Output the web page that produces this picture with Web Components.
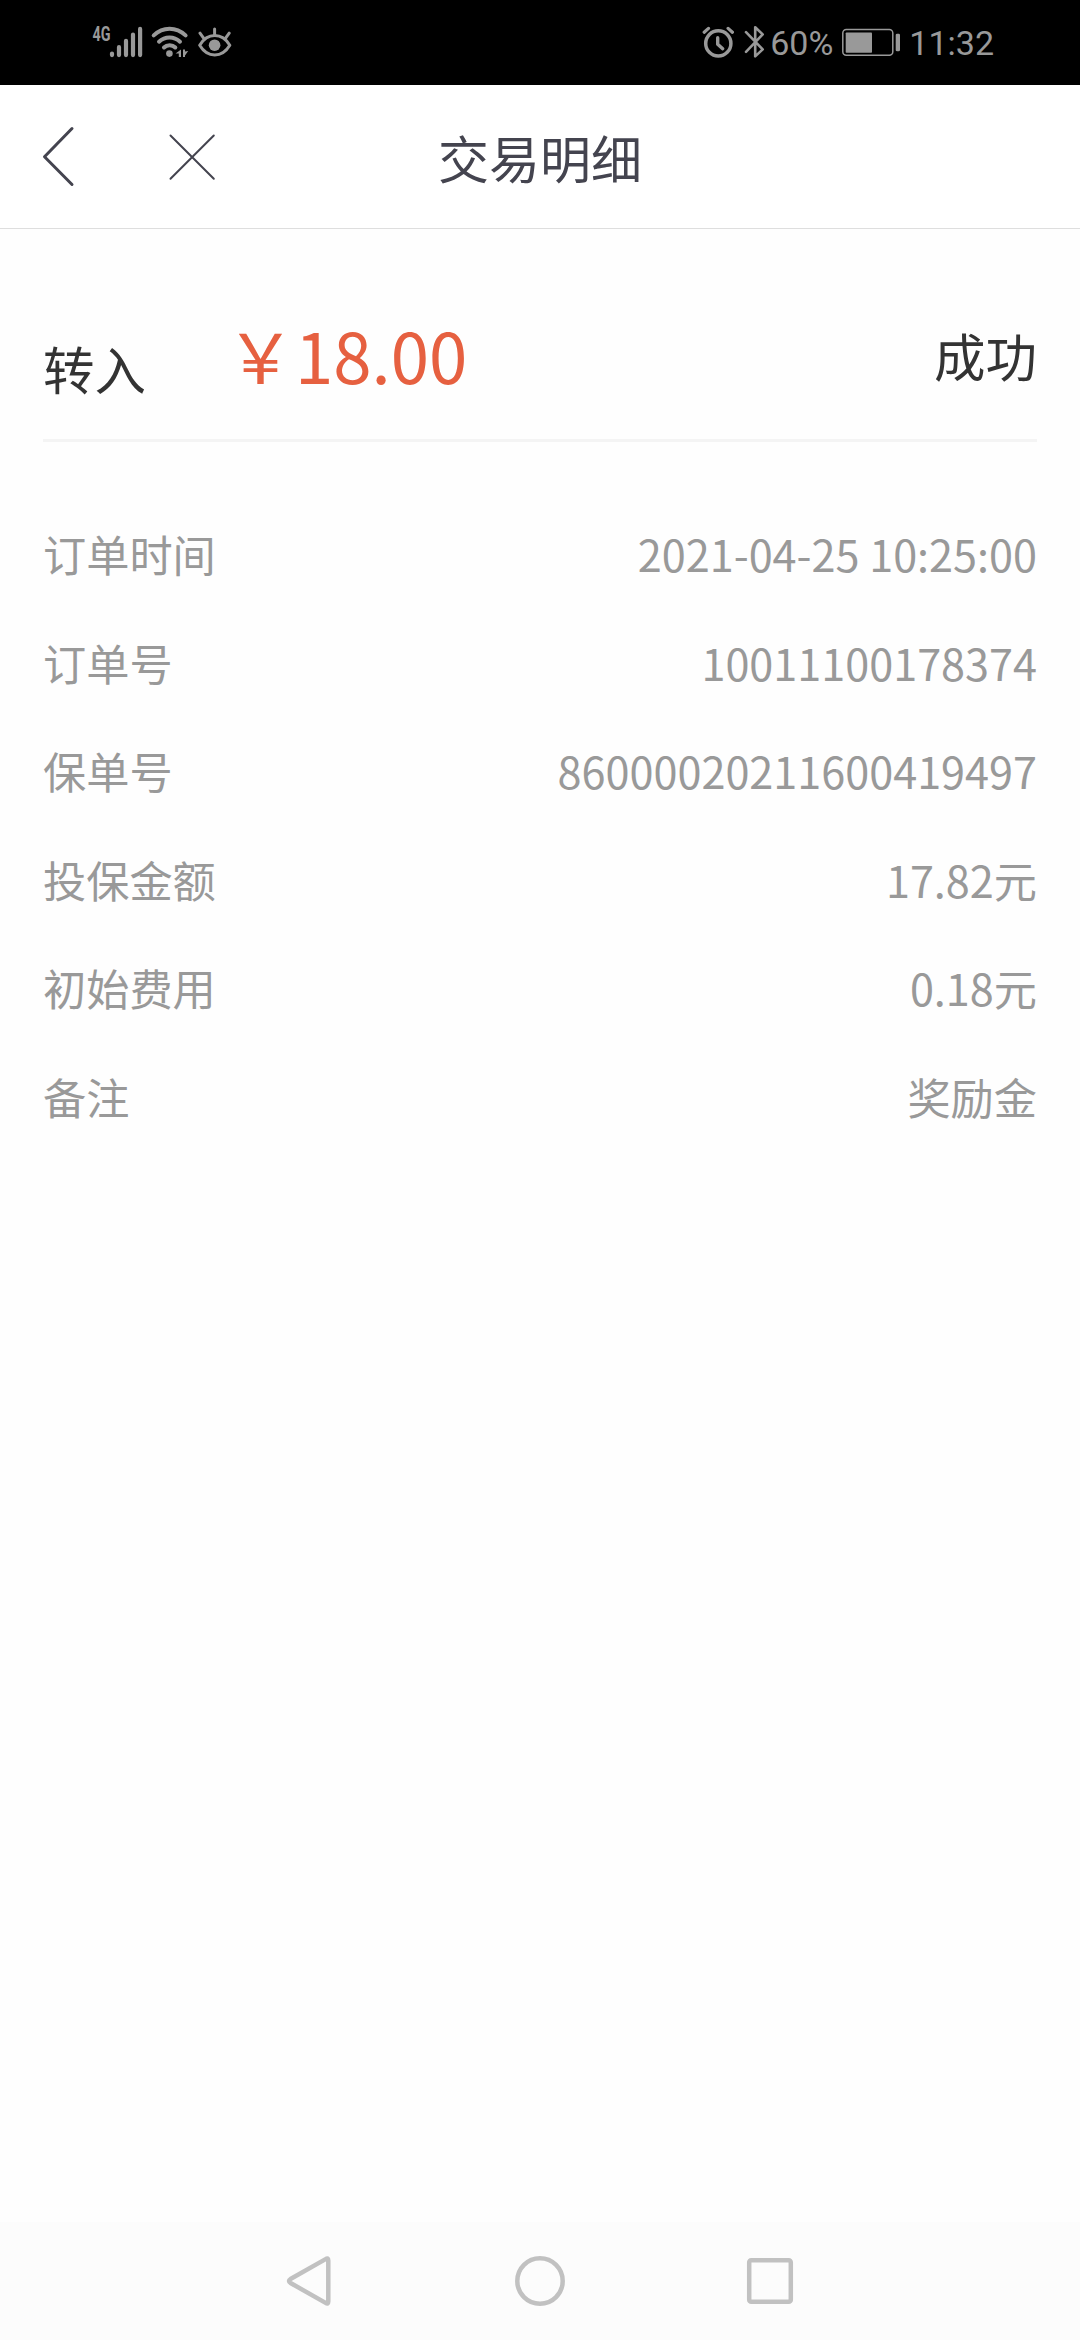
<!DOCTYPE html>
<html lang="zh-CN">
<head>
<meta charset="utf-8">
<title>交易明细</title>
<style>
  html, body {
    margin: 0;
    padding: 0;
    background: #fefefe;
  }

  body {
    font-family: "Noto Sans CJK SC", sans-serif;
  }
</style>
</head>
<body>
<detail-page>
  <status-bar slot="status" network="4G" battery="60%" time="11:32"></status-bar>
  <title-bar slot="header">交易明细</title-bar>
  <amount-summary amount="￥18.00" status="成功">转入</amount-summary>
  <detail-list>
    <detail-row label="订单时间">2021-04-25 10:25:00</detail-row>
    <detail-row label="订单号">10011100178374</detail-row>
    <detail-row label="保单号">86000020211600419497</detail-row>
    <detail-row label="投保金额">17.82元</detail-row>
    <detail-row label="初始费用">0.18元</detail-row>
    <detail-row label="备注">奖励金</detail-row>
  </detail-list>
  <system-nav slot="nav"></system-nav>
</detail-page>

<script>
// attach an open shadow root and fill it from a template
function render(element, html){
  let tmpl = document.createElement('template');
  tmpl.innerHTML = html;
  element.attachShadow({mode: 'open'}).appendChild(tmpl.content.cloneNode(true));
}

class DetailPage extends HTMLElement {
  constructor(){
    super();
    render(this, `
    <style>
    :host {
      display: flex;
      flex-direction: column;
      width: 1080px;
      height: 2340px;
      overflow: hidden;
      background: #fefefe;
    }

    main {
      flex: 1;
      padding: 0 43px;
    }
    </style>
    <slot name="status"></slot>
    <slot name="header"></slot>
    <main><slot></slot></main>
    <slot name="nav"></slot>
    `);
  }
}

class StatusBar extends HTMLElement {
  constructor(){
    super();
    render(this, `
    <style>
    :host {
      display: flex;
      justify-content: space-between;
      box-sizing: border-box;
      height: 85px;
      padding: 22px 86px 0 90px;
      font-family: Roboto, sans-serif;
      font-size: 34px;
      line-height: 42px;
      color: #999;
      background: #000;
    }

    .group {
      display: flex;
      align-items: flex-start;
    }

    svg {
      display: block;
      height: 42px;
      fill: none;
      stroke: currentColor;
      stroke-linecap: round;
      stroke-linejoin: round;
    }

    .solid {
      fill: currentColor;
      stroke: none;
    }

    .alarm { margin-right: 10px; }
    .bluetooth { margin-right: 5px; }
    .battery { margin: 0 8px 0 8px; }
    .eye { margin-left: 8px; }
    </style>
    <div class="group">
      <svg class="signal" width="54" viewBox="0 0 54 42">
        <text class="solid" x="2.5" y="18.5" font-size="20" font-weight="700" textLength="18" lengthAdjust="spacingAndGlyphs">${this.getAttribute('network')}</text>
        <path stroke-width="4.2" d="M22 31.5v1.6M29 25.2v7.9M36 18.8v14.3M43 12.6v20.5M50.1 6.9v26.2"/>
      </svg>
      <svg class="wifi" width="46" viewBox="0 0 46 42">
        <path stroke-width="4" d="M9.7 13.4C19 4.6 32 4.6 41.6 13.4M15 19.7C21 14 30 14 36 19.7M20 25.5C23 22.4 28.3 22.4 31.3 25.5"/>
        <circle class="solid" cx="25.4" cy="31.6" r="3.3"/>
        <path class="solid" d="M37 27.5v7.5h-2.2v-3.6h-3.2zM39 27.5h2v2l3.2-.5-3.2 4.500v1.500h-2z"/>
      </svg>
      <svg class="eye" width="36" viewBox="198 22 36 42">
        <path stroke-width="3" d="M199.7 45.3C207.5 32.300 222 32.300 229.800 45.300C222 58.300 207.500 58.300 199.700 45.300z"/>
        <path stroke-width="3" d="M200 33.200l3.600 5M214.600 28.900v6M229.200 33.200l-3.600 5"/>
        <circle class="solid" cx="214.6" cy="45.2" r="5.8"/>
      </svg>
    </div>
    <div class="group">
      <svg class="alarm" width="32" viewBox="701 22 32 42">
        <circle cx="717.3" cy="43.4" r="12.6" stroke-width="3.5"/>
        <path stroke-width="3.2" d="M703.2 32.3l4.3-3.9M727.1 28.4l4.3 3.9"/>
        <path stroke-width="3.4" d="M716.7 37.7v6.5l5 4.5"/>
      </svg>
      <svg class="bluetooth" width="21" viewBox="743 22 21 42">
        <path stroke-width="2.6" d="M745 32.200l16.700 17.200l-7.500 7v-29.200l7.500 7.200l-16.700 17.400"/>
      </svg>
      <span>${this.getAttribute('battery')}</span>
      <svg class="battery" width="60" viewBox="840 22 60 42">
        <rect x="841.8" y="29.5" width="50" height="25.8" rx="3.5" stroke-width="1.5"/>
        <rect class="solid" x="844.7" y="32.5" width="26.3" height="20.3" rx=".8"/>
        <rect class="solid" x="894.7" y="33.7" width="4.3" height="17.6" rx="1.4"/>
      </svg>
      <span>${this.getAttribute('time')}</span>
    </div>
    `);
  }
}

class TitleBar extends HTMLElement {
  constructor(){
    super();
    render(this, `
    <style>
    :host {
      display: grid;
      grid-template-columns: 1fr auto 1fr;
      box-sizing: border-box;
      height: 144px;
      padding: 0 40px;
      border-bottom: 1px solid #dedede;
      color: #44444f;
      background: #fff;
    }

    .actions {
      display: flex;
      gap: 92px;
      padding-top: 40px;
    }

    svg {
      fill: none;
      stroke: currentColor;
      stroke-linecap: round;
      stroke-linejoin: round;
    }

    h1 {
      margin: 0;
      font-size: 51px;
      font-weight: 400;
      line-height: 145px;
    }
    </style>
    <div class="actions">
      <svg width="36" height="64" viewBox="0 0 36 64"><path stroke-width="3" d="M32 3.5L4.5 31.8L32 59.5"/></svg>
      <svg width="48" height="64" viewBox="0 0 48 64"><path stroke-width="2" d="M2.5 10.5l43.3 43.3M45.8 10.5L2.5 53.8"/></svg>
    </div>
    <h1><slot></slot></h1>
    `);
  }
}

class AmountSummary extends HTMLElement {
  constructor(){
    super();
    render(this, `
    <style>
    :host {
      display: flex;
      box-sizing: border-box;
      height: 213px;
      border-bottom: 3px solid #f4f4f4;
      font-size: 51.5px;
      line-height: 70px;
      color: #333;
    }

    .type {
      width: 183px;
      padding-top: 104px;
    }

    .amount {
      flex: 1;
      padding-top: 75px;
      font-size: 69px;
      line-height: 100px;
      color: #e66040;
    }

    .status {
      padding-top: 91px;
    }
    </style>
    <span class="type"><slot></slot></span>
    <span class="amount">${this.getAttribute('amount')}</span>
    <span class="status">${this.getAttribute('status')}</span>
    `);
  }
}

class DetailList extends HTMLElement {
  constructor(){
    super();
    render(this, `
    <style>
    :host {
      display: block;
      padding-top: 57px;
      font-size: 43.2px;
      line-height: 108.5px;
      color: #999;
    }
    </style>
    <slot></slot>
    `);
  }
}

class DetailRow extends HTMLElement {
  constructor(){
    super();
    render(this, `
    <style>
    :host {
      display: flex;
      justify-content: space-between;
      height: 108.5px;
    }
    </style>
    <span>${this.getAttribute('label')}</span>
    <span><slot></slot></span>
    `);
  }
}

class SystemNav extends HTMLElement {
  constructor(){
    super();
    render(this, `
    <style>
    :host {
      display: flex;
      align-items: center;
      justify-content: center;
      gap: 178px;
      height: 118px;
      color: #c1c1c1;
      background: #fcfcfc;
    }

    svg {
      fill: none;
      stroke: currentColor;
      stroke-width: 4.5;
      stroke-linejoin: round;
    }
    </style>
    <svg width="52" height="52" viewBox="0 0 52 52"><path d="M41.6 4.1Q44.3 2.3 44.3 5.5V46.5Q44.3 49.7 41.6 47.9L6.5 28Q3.5 26 6.5 24z"/></svg>
    <svg width="52" height="52" viewBox="0 0 52 52"><circle cx="26" cy="26" r="22.7"/></svg>
    <svg width="52" height="52" viewBox="0 0 52 52"><rect x="5.2" y="5.2" width="41.6" height="41.6" rx="2"/></svg>
    `);
  }
}

window.customElements.define('detail-page', DetailPage);
window.customElements.define('status-bar', StatusBar);
window.customElements.define('title-bar', TitleBar);
window.customElements.define('amount-summary', AmountSummary);
window.customElements.define('detail-list', DetailList);
window.customElements.define('detail-row', DetailRow);
window.customElements.define('system-nav', SystemNav);
</script>
</body>
</html>
